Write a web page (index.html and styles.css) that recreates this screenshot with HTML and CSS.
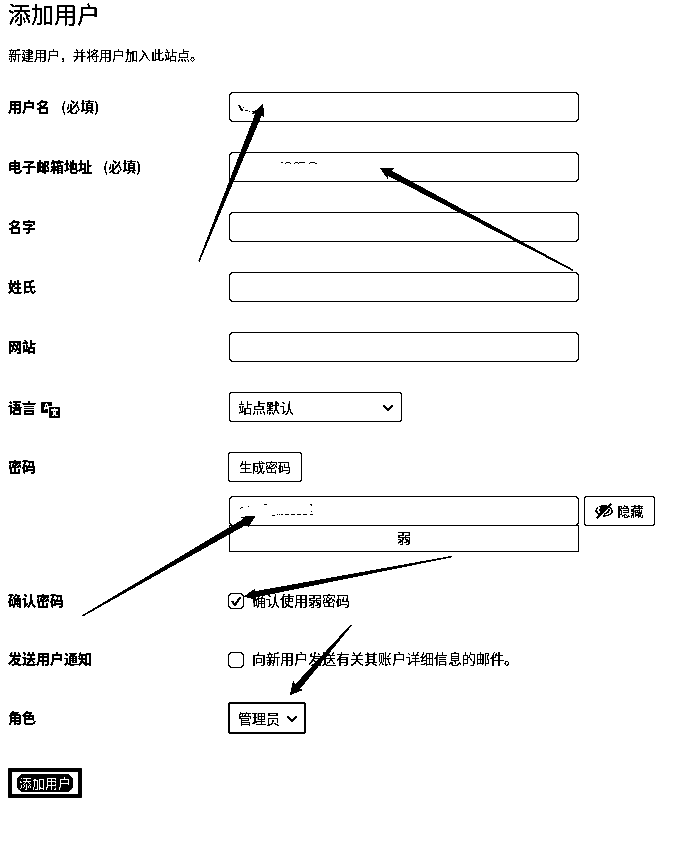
FILE: index.html
```html
<!DOCTYPE html>
<html lang="zh-CN">
<head>
<meta charset="utf-8">
<title>添加用户</title>
<link rel="stylesheet" href="styles.css">
</head>
<body>
<svg class="defs" aria-hidden="true">
  <filter id="mono" color-interpolation-filters="sRGB" x="0" y="0" width="100%" height="100%">
    <feColorMatrix type="saturate" values="0"/>
    <feComponentTransfer>
      <feFuncR type="linear" slope="30" intercept="-20"/>
      <feFuncG type="linear" slope="30" intercept="-20"/>
      <feFuncB type="linear" slope="30" intercept="-20"/>
    </feComponentTransfer>
  </filter>
</svg>
<main class="page">
  <h1>添加用户</h1>
  <p class="intro">新建用户，并将用户加入此站点。</p>
  <form class="form">
    <div class="row"><label>用户名 <span class="required">(必填)</span></label>
      <div class="input"><svg class="marks" viewBox="0 0 90 28"><path d="M8 12.5h2M9 13.5h2M9 14.5h2M10 15.5h2M10 16.5h3M13 14.5h1M11 17.5h2M15 17.5h3M19 18.5h1M22 18.5h5"/></svg></div></div>
    <div class="row"><label>电子邮箱地址 <span class="required">(必填)</span></label>
      <div class="input"><svg class="marks" viewBox="0 0 90 28"><path d="M51 9.5h2M56 9.5h4M55 10.5h1M60 10.5h1M65 9.5h3M64 10.5h1M68 10.5h1M69 9.5h6M80 9.5h5M79 10.5h1M85 10.5h2"/></svg></div></div>
    <div class="row"><label>名字</label><div class="input"></div></div>
    <div class="row"><label>姓氏</label><div class="input"></div></div>
    <div class="row"><label>网站</label><div class="input"></div></div>
    <div class="row"><label class="lang-label">语言
      <svg class="translate" viewBox="0 0 20 18"><path fill="#000" d="M2 1h8q1 0 1 1v3H9q-2 0-2 2v5H2q-2 0-2-2V3q0-2 2-2zM9 6h8q2 0 2 2v7q0 2-2 2H10q-2 0-2-2V7q0-1 1-1z"/><path fill="none" stroke="#fff" stroke-width="1.5" d="M3 9l2-6h1l2 5M4 7h3M10 9h7M13.5 7v2M11 15q4-2 4-6M12 10q1 4 5 5"/></svg></label>
      <div class="select language">站点默认<svg class="chevron" viewBox="0 0 12 8"><path d="M1.5 1.5l4.5 4.500 4.500-4.500"/></svg></div></div>
    <div class="row password"><label>密码</label>
      <div class="password-fields">
        <button type="button" class="button">生成密码</button>
        <div class="password-line">
          <div class="password-box">
            <div class="input"><svg class="marks" viewBox="0 0 90 28"><path d="M10 11.500h1M11 10.500h2M18 9.500h1M34 7.500h3M42 18.500h3M47 17.500h1M49 17.500h1M51 17.500h2M55 17.500h4M61 17.500h4M67 17.500h4M73 17.500h4M80 7.500h2M81 8.500h1M81 14.500h1M80 17.500h3"/></svg></div>
            <div class="strength">弱</div>
          </div>
          <button type="button" class="button hide"><svg class="eye" viewBox="0 0 18 16"><path fill="#000" d="M0 8q2-5 8-6 3 0 5 1L6 12q-5-1-6-4z"/><path fill="none" stroke="#fff" stroke-width="1.8" d="M5 4q-4 3 0 6"/><path fill="none" stroke="#000" stroke-width="1.2" d="M14 4q4 3 3 5-2 4-9 4M14 6q0 4-5 5"/><path fill="none" stroke="#000" stroke-width="2.3" d="M2 15L16 1"/></svg>隐藏</button>
        </div>
      </div></div>
    <div class="row confirm"><label>确认密码</label>
      <div class="choice"><span class="checkbox"><svg viewBox="0 0 14 14"><path d="M3 7l3 4 5.5-8"/></svg></span><span class="choice-text">确认使用弱密码</span></div></div>
    <div class="row notify"><label>发送用户通知</label>
      <div class="choice lower"><span class="checkbox"></span><span class="choice-text">向新用户发送有关其账户详细信息的邮件。</span></div></div>
    <div class="row"><label class="lang-label">角色</label>
      <div class="select role">管理员<svg class="chevron" viewBox="0 0 12 8"><path d="M1.5 1.5l4.500 4.500 4.500-4.500"/></svg></div></div>
    <button type="button" class="submit"><span>添加用户</span></button>
  </form>
  <svg class="arrows" viewBox="0 0 679 850">
    <path transform="translate(263 104) rotate(-67.9)" d="M0 0L-14-7-11-3.500-170-.7V.5L-11 3-12 6z"/>
    <path transform="translate(380 168) rotate(207.900)" d="M0 0L-12-6-11-3-218-.7V.5L-11 3-13 7z"/>
    <path transform="translate(255.500 516) rotate(-30)" d="M0 0L-14-7-11-3.500-200-.7V.5L-11 3-12 6z"/>
    <path transform="translate(244 596.500) rotate(169.100)" d="M0 0L-12-6-11-3-212-.7V.5L-11 3-13 6z"/>
    <path transform="translate(290 695) rotate(131.100)" d="M0 0L-12-6-11-3.500-93-.7V.5L-11 3-13 7z"/>
  </svg>
</main>
</body>
</html>
```
FILE: styles.css
```css
* { box-sizing: border-box; }
body { margin: 0; background: #fff; color: #000; font: 14px/20px "Noto Sans CJK SC", sans-serif; }
.defs { position: absolute; width: 0; height: 0; }
.page { position: relative; height: 850px; padding: 0 8px; overflow: hidden; background: #fff; filter: url(#mono); }
h1 { margin: 0; font-size: 23px; font-weight: 400; line-height: 26px; }
.intro { margin: 19px 0 27px; font-size: 13px; }
.row { display: grid; grid-template-columns: 221px 1fr; height: 60px; align-items: start; }
.row > label { font-weight: 600; line-height: 20px; padding-top: 4px; }
.row > .lang-label { padding-top: 5px; }
.required { margin-left: 8px; font-weight: 500; }
.input { width: 350px; height: 30px; border: 1px solid #000; border-radius: 4px; background: #fff; overflow: hidden; }
.marks { display: block; width: 90px; height: 28px; fill: none; stroke: #000; stroke-width: 1; }
.translate { width: 20px; height: 18px; margin-left: 2px; vertical-align: -6px; }
.select { display: flex; align-items: center; justify-content: space-between; height: 30px; border: 1px solid #000; border-radius: 3px; padding: 0 7px 1px 8px; background: #fff; }
.language { width: 173px; }
.chevron { width: 12px; height: 8px; margin-top: 2px; fill: none; stroke: #000; stroke-width: 2; }
.password { height: 134px; }
.password-fields { margin-left: -1px; }
.button { display: flex; align-items: center; justify-content: center; width: 74px; height: 30px; padding: 0 0 1px; border: 1px solid #000; border-radius: 3px; background: #fff; color: #000; font: 13px/18px "Noto Sans CJK SC", sans-serif; }
.password-line { display: flex; gap: 5px; margin: 14px 0 0 1px; }
.strength { width: 350px; height: 27px; margin-top: -1px; border: 1px solid #000; text-align: center; line-height: 23px; }
.hide { width: 71px; gap: 4px; }
.eye { width: 18px; height: 16px; margin-top: 1px; }
.confirm { height: 58px; }
.notify { height: 58px; }
.choice { display: flex; align-items: center; gap: 8px; height: 30px; margin-left: -1px; }
.choice-text { margin-top: -2px; }
.lower .checkbox { margin-top: 2px; }
.checkbox { width: 16px; height: 16px; border: 1px solid #000; border-radius: 4px; }
.checkbox svg { display: block; width: 14px; height: 14px; fill: none; stroke: #000; stroke-width: 2; }
.role { width: 78px; height: 32px; margin-left: -1px; padding: 0 6px 1px 8px; border-width: 2px; }
.submit { display: flex; align-items: center; justify-content: center; width: 74px; height: 30px; margin-top: 6px; padding: 0; border: 4px solid #000; border-radius: 2px; background: #fff; color: #fff; font: 500 13px/18px "Noto Sans CJK SC", sans-serif; }
.submit span { padding: 0 2px; border-radius: 7px; background: #000; }
.arrows { position: absolute; left: 0; top: 0; width: 679px; height: 850px; }
```
